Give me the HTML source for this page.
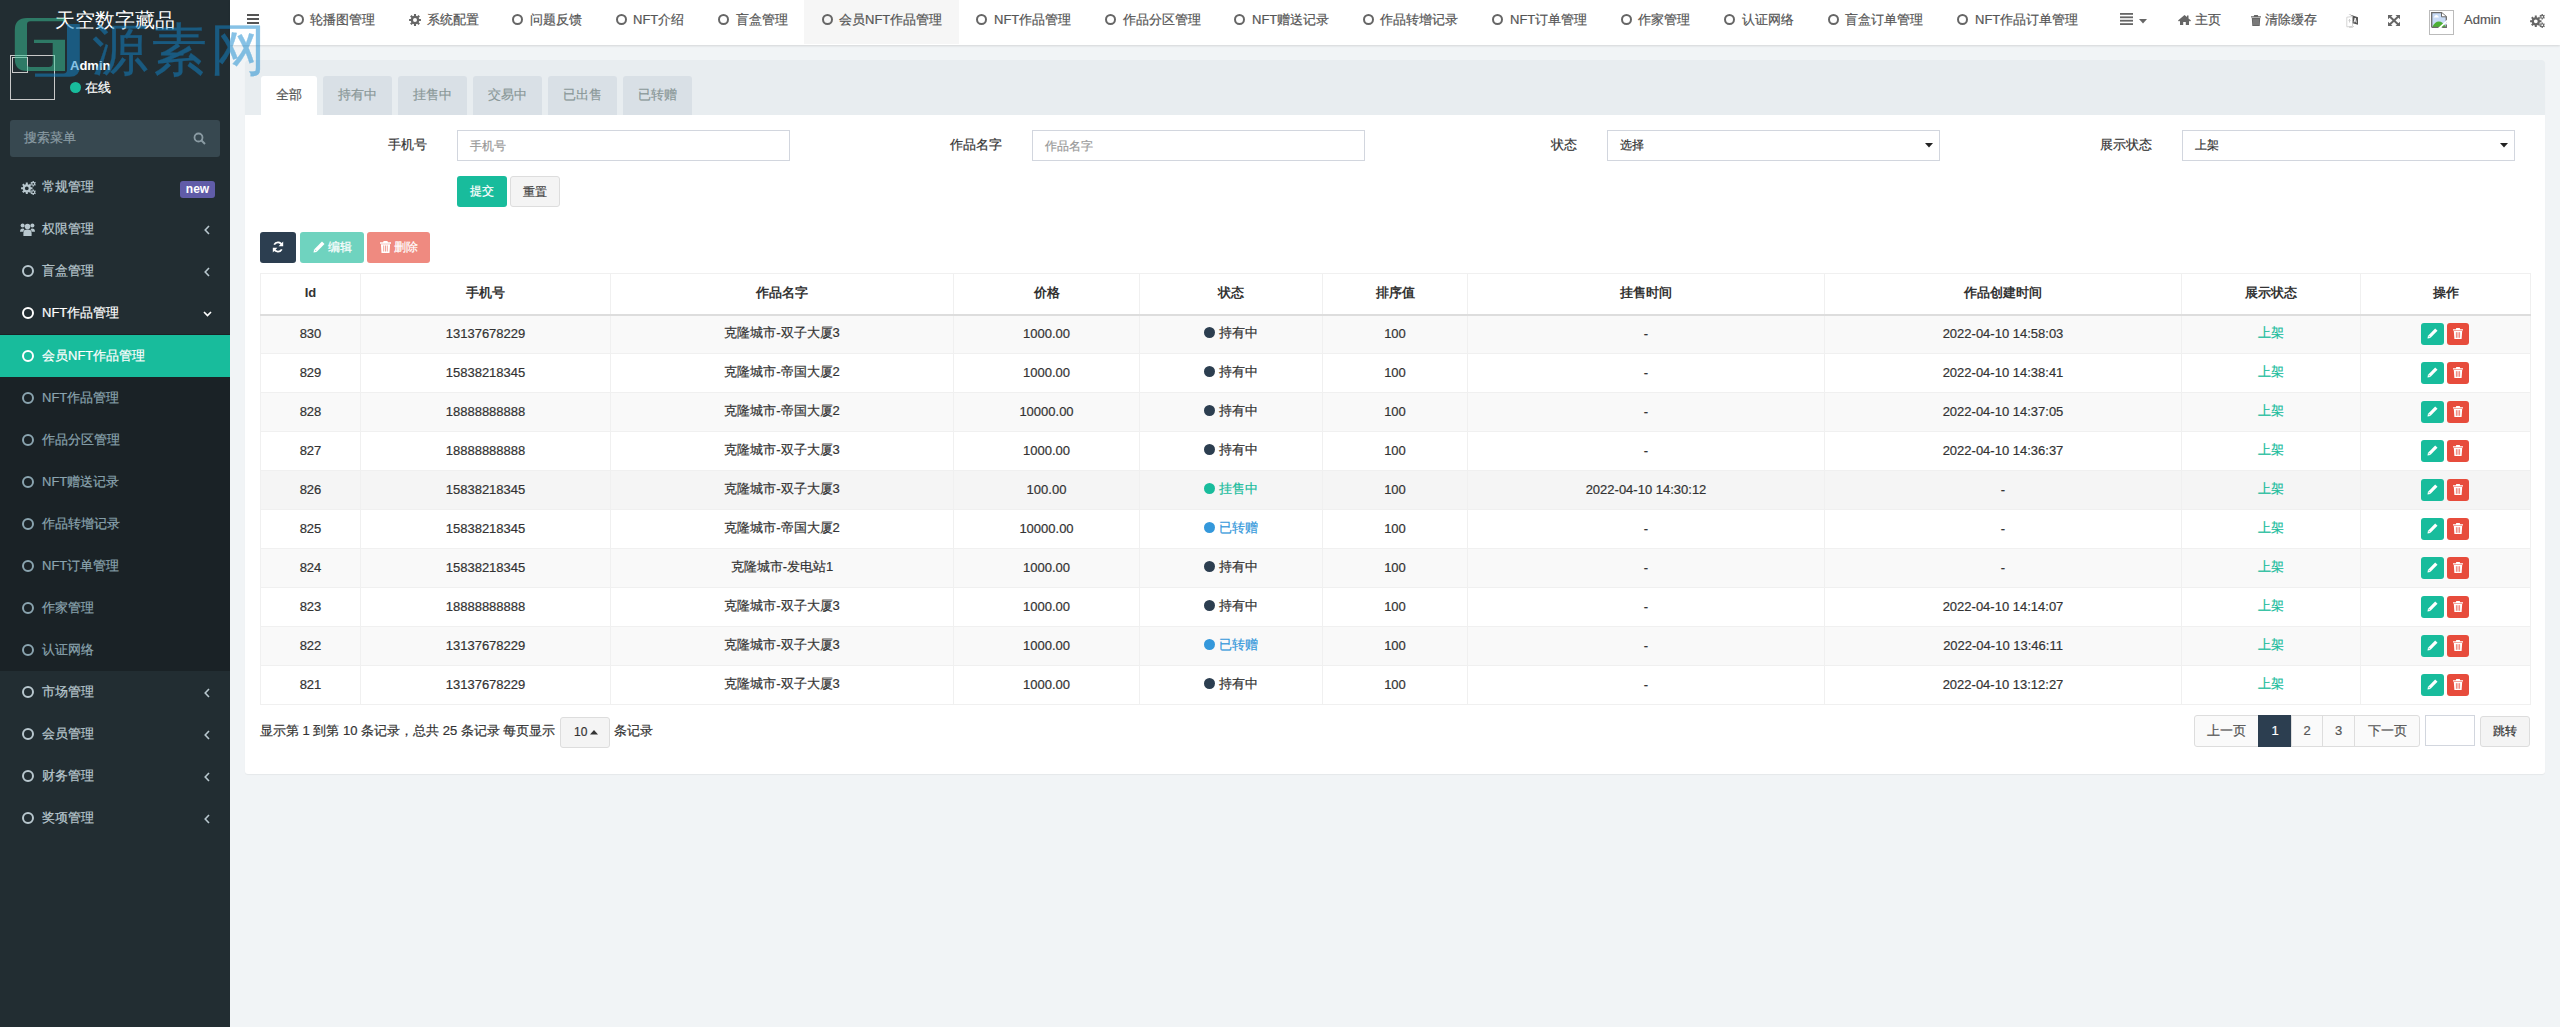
<!DOCTYPE html>
<html><head><meta charset="utf-8">
<style>
*{box-sizing:border-box;margin:0;padding:0}
html,body{width:2560px;height:1027px;overflow:hidden}
body{position:relative;background:#f1f4f6;font-family:"Liberation Sans",sans-serif;font-size:13px;color:#333}
.abs{position:absolute}
/* sidebar */
#side{position:absolute;left:0;top:0;width:230px;height:1027px;background:#222d32}
#side .logo{position:absolute;left:0;top:0;width:230px;height:45px;text-align:center;color:#fff;font-size:20px;line-height:40px}
#side .menu{position:absolute;left:0;top:166px;width:230px}
#side .mi{position:relative;height:42px;line-height:42px;color:#b8c7ce;font-size:13px;padding-left:42px}
#side .mi.sub{background:#1a2226;color:#8aa4af}
#side .mi.act{background:#18bc9c;color:#fff}
#side .mi.open{color:#fff}
.circ{position:absolute;width:12px;height:12px;border:2px solid currentColor;border-radius:50%}
#side .mi .circ{left:22px;top:15px}
#side .mi .ic{position:absolute;line-height:0}
#side .mi .ang{position:absolute;left:204px;top:17px}
#side .mi .angd{position:absolute;left:203px;top:19px}
/* header */
#hdr{position:absolute;left:230px;top:0;width:2330px;height:45px;background:#fff;box-shadow:0 1px 2px rgba(0,0,0,.12)}
#hdr .t{position:absolute;top:0;height:45px;line-height:40px;color:#555;font-size:13px;white-space:nowrap}
#hdr .circ{top:14px;width:11px;height:11px;border-width:2px;color:#666}
/* panel */
#panel{position:absolute;left:245px;top:60px;width:2300px;height:714px;background:#fff;border-radius:3px;box-shadow:0 1px 1px rgba(0,0,0,.05)}
#ph{position:absolute;left:0;top:0;width:2300px;height:55px;background:#e8edf0;border-radius:3px 3px 0 0}
.tab{position:absolute;top:16px;height:39px;line-height:37px;background:#d9e0e6;color:#8a9898;text-align:center;border-radius:3px 3px 0 0}
.tab.on{background:#fff;color:#555}
.lbl{text-align:right;font-size:13px;color:#333;line-height:18px}
.inp{width:333px;height:31px;border:1px solid #d2d6de;background:#fff}
.inp .ph{position:absolute;left:12px;top:6px;font-size:12px;color:#999;line-height:18px}
.inp .sv{position:absolute;left:12px;top:5px;font-size:12px;color:#333;line-height:18px}
.btn{text-align:center;font-size:12px;line-height:31px;border-radius:3px}
#tbl{border-collapse:collapse;table-layout:fixed;width:2270px;border:1px solid #f0f0f0}
#tbl th,#tbl td{text-align:center;vertical-align:middle;border-left:1px solid #f0f0f0;border-right:1px solid #f0f0f0}
#tbl th{height:41px;font-weight:bold;font-size:13px;color:#333;border-bottom:2px solid #ddd;padding-bottom:2px}
#tbl td{height:39px;font-size:13px;color:#333;border-top:1px solid #f0f0f0;padding-bottom:2px}
#tbl tr.odd td{background:#f9f9f9}
#tbl tr.hov td{background:#f5f5f5}
#tbl .dot{display:inline-block;width:11px;height:11px;border-radius:50%;margin-right:4px;vertical-align:-1px}
#tbl .up{color:#18bc9c}
.ob{display:inline-block;width:22px;height:22px;border-radius:3px;vertical-align:middle;text-align:center;line-height:22px;position:relative;left:-1px;top:1px}
.ob svg{vertical-align:-1px}
.pg{height:32px;display:flex}
.pg span{display:block;height:32px;line-height:30px;text-align:center;font-size:13px;color:#555;background:#fafafa;border:1px solid #ddd;margin-left:-1px}
.pg span.on{background:#2c3e50;border-color:#2c3e50;color:#fff}
body *{-webkit-text-stroke:0.2px currentColor}
th,b,.nostroke,#side .logo,#wm text,.bold{-webkit-text-stroke:0}
</style></head><body>

<svg id="wm" class="abs" style="left:0;top:0;z-index:50;pointer-events:none" width="280" height="82" viewBox="0 0 280 82">
  <g fill="rgb(58,199,154)" fill-opacity="0.5">
    <path d="M27 18H64.5V21.2H30.5Q27 21.2 27 24.5V63.8Q27 67 30.5 67H48.5Q52.7 67 52.7 62.8V42.9H34V39.7H65V71H27Q14.8 71 14.8 59V30Q14.8 18 27 18Z"/>
  </g>
  <g fill="rgb(18,135,206)" fill-opacity="0.5">
    <path d="M67 24H79.8V66.7Q79.8 76.7 69.8 76.7H35V73.4H63.5Q67 73.4 67 70Z"/>
  </g>
  <g opacity="0.5"><text x="92" y="69" font-size="56" letter-spacing="3" fill="rgb(18,135,206)" stroke="rgb(18,135,206)" stroke-width="0.3" stroke-linejoin="round">源素网</text></g>
</svg>
<div id="side">
  <div class="logo">天空数字藏品</div>
  <div class="abs" style="left:10px;top:55px;width:45px;height:45px;border:1px solid #c9c9c9"></div>
  <div class="abs" style="left:12px;top:57px;width:16px;height:16px;border:1px solid #c9c9c9"></div>
  <div class="abs bold" style="left:70px;top:58px;color:#fff;font-weight:bold;font-size:13px;line-height:16px">Admin</div>
  <div class="abs" style="left:70px;top:82px;width:11px;height:11px;border-radius:50%;background:#18bc9c"></div>
  <div class="abs" style="left:85px;top:79px;color:#fff;font-size:13px;line-height:18px">在线</div>
  <div class="abs" style="left:10px;top:120px;width:210px;height:37px;background:#374850;border-radius:3px"></div>
  <div class="abs" style="left:24px;top:129px;color:#8a9ba3;font-size:13px;line-height:18px">搜索菜单</div>
  <svg class="abs" style="left:193px;top:132px" width="13" height="13" viewBox="0 0 13 13"><circle cx="5.5" cy="5.5" r="4" fill="none" stroke="#8a9ba3" stroke-width="1.8"/><line x1="8.5" y1="8.5" x2="12" y2="12" stroke="#8a9ba3" stroke-width="2"/></svg>
  <div class="menu">
    <div class="mi"><span class="ic" style="left:21px;top:15px"><svg width="15" height="14" viewBox="0 0 15 14"><path fill-rule="evenodd" fill="currentColor" d="M4.82 3.22L4.78 1.59L6.82 1.59L6.78 3.22L7.99 3.72L9.12 2.54L10.56 3.98L9.38 5.11L9.88 6.32L11.51 6.28L11.51 8.32L9.88 8.28L9.38 9.49L10.56 10.62L9.12 12.06L7.99 10.88L6.78 11.38L6.82 13.01L4.78 13.01L4.82 11.38L3.61 10.88L2.48 12.06L1.04 10.62L2.22 9.49L1.72 8.28L0.09 8.32L0.09 6.28L1.72 6.32L2.22 5.11L1.04 3.98L2.48 2.54L3.61 3.72ZM7.70 7.30A1.9 1.9 0 1 0 3.90 7.30A1.9 1.9 0 1 0 7.70 7.30ZM11.57 1.01L11.49 0.09L12.91 0.09L12.83 1.01L13.43 1.36L14.19 0.83L14.90 2.06L14.07 2.45L14.07 3.15L14.90 3.54L14.19 4.77L13.43 4.24L12.83 4.59L12.91 5.51L11.49 5.51L11.57 4.59L10.97 4.24L10.21 4.77L9.50 3.54L10.33 3.15L10.33 2.45L9.50 2.06L10.21 0.83L10.97 1.36ZM13.10 2.80A0.9 0.9 0 1 0 11.30 2.80A0.9 0.9 0 1 0 13.10 2.80ZM11.57 9.41L11.49 8.49L12.91 8.49L12.83 9.41L13.43 9.76L14.19 9.23L14.90 10.46L14.07 10.85L14.07 11.55L14.90 11.94L14.19 13.17L13.43 12.64L12.83 12.99L12.91 13.91L11.49 13.91L11.57 12.99L10.97 12.64L10.21 13.17L9.50 11.94L10.33 11.55L10.33 10.85L9.50 10.46L10.21 9.23L10.97 9.76ZM13.10 11.20A0.9 0.9 0 1 0 11.30 11.20A0.9 0.9 0 1 0 13.10 11.20Z"/></svg></span>常规管理<span class="abs bold" style="left:180px;top:15px;width:35px;height:17px;line-height:17px;background:#605ca8;color:#fff;font-size:12px;font-weight:bold;text-align:center;border-radius:3px">new</span></div>
    <div class="mi"><span class="ic" style="left:20px;top:15px"><svg width="15" height="13" viewBox="0 0 15 13"><g fill="currentColor"><circle cx="2.6" cy="2.6" r="2"/><circle cx="12.4" cy="2.6" r="2"/><circle cx="7.5" cy="3.6" r="2.8"/><path d="M0 8.8Q0 5.4 2.8 5.4Q4 5.4 4.4 6.2Q3.4 7.4 3.4 8.8Z"/><path d="M15 8.8Q15 5.4 12.2 5.4Q11 5.4 10.6 6.2Q11.6 7.4 11.6 8.8Z"/><path d="M3.4 13V10.2Q3.4 6.8 6 6.8H9Q11.6 6.8 11.6 10.2V13Z"/></g></svg></span>权限管理<svg class="ang" width="6" height="10" viewBox="0 0 6 10"><path d="M5 1L1.2 5 5 9" fill="none" stroke="currentColor" stroke-width="1.6"/></svg></div>
    <div class="mi"><i class="circ"></i>盲盒管理<svg class="ang" width="6" height="10" viewBox="0 0 6 10"><path d="M5 1L1.2 5 5 9" fill="none" stroke="currentColor" stroke-width="1.6"/></svg></div>
    <div class="mi open"><i class="circ"></i>NFT作品管理<svg class="angd" width="9" height="6" viewBox="0 0 9 6"><path d="M1 1L4.5 4.6 8 1" fill="none" stroke="currentColor" stroke-width="1.6"/></svg></div>
    <div style="background:#1a2226;padding-top:1px"><div class="mi act"><i class="circ"></i>会员NFT作品管理</div>
    <div class="mi sub"><i class="circ"></i>NFT作品管理</div>
    <div class="mi sub"><i class="circ"></i>作品分区管理</div>
    <div class="mi sub"><i class="circ"></i>NFT赠送记录</div>
    <div class="mi sub"><i class="circ"></i>作品转增记录</div>
    <div class="mi sub"><i class="circ"></i>NFT订单管理</div>
    <div class="mi sub"><i class="circ"></i>作家管理</div>
    <div class="mi sub"><i class="circ"></i>认证网络</div></div>
    <div class="mi"><i class="circ"></i>市场管理<svg class="ang" width="6" height="10" viewBox="0 0 6 10"><path d="M5 1L1.2 5 5 9" fill="none" stroke="currentColor" stroke-width="1.6"/></svg></div>
    <div class="mi"><i class="circ"></i>会员管理<svg class="ang" width="6" height="10" viewBox="0 0 6 10"><path d="M5 1L1.2 5 5 9" fill="none" stroke="currentColor" stroke-width="1.6"/></svg></div>
    <div class="mi"><i class="circ"></i>财务管理<svg class="ang" width="6" height="10" viewBox="0 0 6 10"><path d="M5 1L1.2 5 5 9" fill="none" stroke="currentColor" stroke-width="1.6"/></svg></div>
    <div class="mi"><i class="circ"></i>奖项管理<svg class="ang" width="6" height="10" viewBox="0 0 6 10"><path d="M5 1L1.2 5 5 9" fill="none" stroke="currentColor" stroke-width="1.6"/></svg></div>
  </div>
</div>

<div id="hdr">
  <div class="abs" style="left:574px;top:0;width:155px;height:44px;background:#f6f6f6"></div>
  <svg class="abs" style="left:17px;top:14px" width="12" height="11"><rect x="0" y="0" width="12" height="2" fill="#555"/><rect x="0" y="4" width="12" height="2" fill="#555"/><rect x="0" y="8" width="12" height="2" fill="#555"/></svg>
  <i class="circ" style="left:63px"></i>
  <span class="t" style="left:80px">轮播图管理</span>
  <span class="abs" style="left:179px;top:14px;color:#666;line-height:0"><svg width="12" height="12" viewBox="0 0 12 12"><path fill-rule="evenodd" fill="currentColor" d="M5.00 1.82L4.95 0.09L7.05 0.09L7.00 1.82L8.25 2.33L9.43 1.08L10.92 2.57L9.67 3.75L10.18 5.00L11.91 4.95L11.91 7.05L10.18 7.00L9.67 8.25L10.92 9.43L9.43 10.92L8.25 9.67L7.00 10.18L7.05 11.91L4.95 11.91L5.00 10.18L3.75 9.67L2.57 10.92L1.08 9.43L2.33 8.25L1.82 7.00L0.09 7.05L0.09 4.95L1.82 5.00L2.33 3.75L1.08 2.57L2.57 1.08L3.75 2.33ZM8.00 6.00A2 2 0 1 0 4.00 6.00A2 2 0 1 0 8.00 6.00Z"/></svg></span>
  <span class="t" style="left:197px">系统配置</span>
  <i class="circ" style="left:282px"></i>
  <span class="t" style="left:300px">问题反馈</span>
  <i class="circ" style="left:386px"></i>
  <span class="t" style="left:403px">NFT介绍</span>
  <i class="circ" style="left:488px"></i>
  <span class="t" style="left:506px">盲盒管理</span>
  <i class="circ" style="left:592px"></i>
  <span class="t" style="left:609px">会员NFT作品管理</span>
  <i class="circ" style="left:746px"></i>
  <span class="t" style="left:764px">NFT作品管理</span>
  <i class="circ" style="left:875px"></i>
  <span class="t" style="left:893px">作品分区管理</span>
  <i class="circ" style="left:1004px"></i>
  <span class="t" style="left:1022px">NFT赠送记录</span>
  <i class="circ" style="left:1133px"></i>
  <span class="t" style="left:1150px">作品转增记录</span>
  <i class="circ" style="left:1262px"></i>
  <span class="t" style="left:1280px">NFT订单管理</span>
  <i class="circ" style="left:1391px"></i>
  <span class="t" style="left:1408px">作家管理</span>
  <i class="circ" style="left:1494px"></i>
  <span class="t" style="left:1512px">认证网络</span>
  <i class="circ" style="left:1598px"></i>
  <span class="t" style="left:1615px">盲盒订单管理</span>
  <i class="circ" style="left:1727px"></i>
  <span class="t" style="left:1745px">NFT作品订单管理</span>
  <svg class="abs" style="left:1890px;top:13px" width="14" height="12" viewBox="0 0 14 12"><g fill="#666"><rect x="0" y="0" width="13" height="1.8"/><rect x="0" y="3.4" width="13" height="1.8"/><rect x="0" y="6.8" width="13" height="1.8"/><rect x="0" y="10.2" width="13" height="1.8"/></g></svg>
  <svg class="abs" style="left:1909px;top:19px" width="8" height="5" viewBox="0 0 8 5"><path d="M0 0H8L4 4.5Z" fill="#666"/></svg>
  <svg class="abs" style="left:1948px;top:15px" width="13" height="10" viewBox="0 0 13 10"><path d="M6.5 0L0 5.6 1 6.5 2 5.7V10H5.2V7H7.8V10H11V5.7L12 6.5 13 5.6 10.5 3.4V0.6H9V2.1Z" fill="#666"/></svg>
  <span class="t" style="left:1965px">主页</span>
  <svg class="abs" style="left:2021px;top:15px" width="10" height="11" viewBox="0 0 10 11"><path d="M3.2 0H6.8L7.3 1.2H10V2.4H0V1.2H2.7ZM0.8 3H9.2L8.7 11H1.3Z" fill="#666"/><path d="M3 4.2V10M5 4.2V10M7 4.2V10" stroke="#999" stroke-width=".8"/></svg>
  <span class="t" style="left:2035px">清除缓存</span>
  <svg class="abs" style="left:2116px;top:13px" width="14" height="15" viewBox="0 0 14 15"><path d="M0.8 4.2L6.5 3.6V13.4L0.8 13.8Z" fill="#fff" stroke="#d0d0d0" stroke-width=".9"/><path d="M2.5 7.5Q3.6 6 4.6 7.6M3.5 6.2V9.5" stroke="#bbb" stroke-width=".7" fill="none"/><path d="M2.4 1.1L12 4.3V11.8L6.7 10.3V3.2Z" fill="#555"/><path d="M8 9.4L9.2 5 10.4 9.6M8.5 8H9.9" stroke="#fff" stroke-width=".9" fill="none"/><path d="M3 14.3H6.5L8 13" stroke="#bbb" stroke-width=".7" fill="none"/></svg>
  <svg class="abs" style="left:2158px;top:15px" width="12" height="11" viewBox="0 0 12 11"><g fill="#666"><path d="M0 0H4.5L3.2 1.3 6 4 3.2 1.3Z"/></g><path d="M1.2 1L10.8 10M10.8 1L1.2 10" stroke="#666" stroke-width="2"/><path d="M0 0H4.5L0 4.2ZM12 0H7.5L12 4.2ZM0 11H4.5L0 6.8ZM12 11H7.5L12 6.8Z" fill="#666"/></svg>
  <div class="abs" style="left:2199px;top:10px;width:25px;height:25px;border:1px solid #bbb"></div>
  <svg class="abs" style="left:2201px;top:12px" width="17" height="17" viewBox="0 0 17 17"><path d="M0.7 0.7H10.5L15.3 4.8V15.3H0.7Z" fill="#c8dbf6"/><path d="M2.6 5.6H7.8Q7.9 4.2 6.8 4.1Q6.3 2.7 5 3.2Q3.7 3.2 3.6 4.5Q2.6 4.6 2.6 5.6Z" fill="#fff"/><path d="M1.2 15.3Q3.8 9.6 7.8 9.6Q12 9.6 15 15.3Z" fill="#4cb034"/><path d="M0.7 15.3V0.7H10.5L15.3 4.8V10.4M0.7 15.3H8.4M15.3 12.6V15.3H11.2" fill="none" stroke="#6b6b6b" stroke-width="1.3"/><path d="M7.6 16.6L16.6 8.4" stroke="#fff" stroke-width="1.7"/><path d="M10.5 0.7V4.8H15.3" fill="#fff" stroke="#6b6b6b" stroke-width="1"/></svg>
  <span class="t" style="left:2234px">Admin</span>
  <span class="abs" style="left:2300px;top:14px;color:#666;line-height:0"><svg width="15" height="14" viewBox="0 0 15 14"><path fill-rule="evenodd" fill="currentColor" d="M4.82 3.22L4.78 1.59L6.82 1.59L6.78 3.22L7.99 3.72L9.12 2.54L10.56 3.98L9.38 5.11L9.88 6.32L11.51 6.28L11.51 8.32L9.88 8.28L9.38 9.49L10.56 10.62L9.12 12.06L7.99 10.88L6.78 11.38L6.82 13.01L4.78 13.01L4.82 11.38L3.61 10.88L2.48 12.06L1.04 10.62L2.22 9.49L1.72 8.28L0.09 8.32L0.09 6.28L1.72 6.32L2.22 5.11L1.04 3.98L2.48 2.54L3.61 3.72ZM7.70 7.30A1.9 1.9 0 1 0 3.90 7.30A1.9 1.9 0 1 0 7.70 7.30ZM11.57 1.01L11.49 0.09L12.91 0.09L12.83 1.01L13.43 1.36L14.19 0.83L14.90 2.06L14.07 2.45L14.07 3.15L14.90 3.54L14.19 4.77L13.43 4.24L12.83 4.59L12.91 5.51L11.49 5.51L11.57 4.59L10.97 4.24L10.21 4.77L9.50 3.54L10.33 3.15L10.33 2.45L9.50 2.06L10.21 0.83L10.97 1.36ZM13.10 2.80A0.9 0.9 0 1 0 11.30 2.80A0.9 0.9 0 1 0 13.10 2.80ZM11.57 9.41L11.49 8.49L12.91 8.49L12.83 9.41L13.43 9.76L14.19 9.23L14.90 10.46L14.07 10.85L14.07 11.55L14.90 11.94L14.19 13.17L13.43 12.64L12.83 12.99L12.91 13.91L11.49 13.91L11.57 12.99L10.97 12.64L10.21 13.17L9.50 11.94L10.33 11.55L10.33 10.85L9.50 10.46L10.21 9.23L10.97 9.76ZM13.10 11.20A0.9 0.9 0 1 0 11.30 11.20A0.9 0.9 0 1 0 13.10 11.20Z"/></svg></span>
</div>

<div id="panel">
  <div id="ph">
    <div class="tab on" style="left:16px;width:56px">全部</div>
    <div class="tab" style="left:78px;width:69px">持有中</div>
    <div class="tab" style="left:153px;width:69px">挂售中</div>
    <div class="tab" style="left:228px;width:69px">交易中</div>
    <div class="tab" style="left:303px;width:69px">已出售</div>
    <div class="tab" style="left:378px;width:69px">已转赠</div>
  </div>
  <div class="abs lbl" style="left:-18px;top:76px;width:200px">手机号</div>
  <div class="abs inp" style="left:212px;top:70px"><span class="ph">手机号</span></div>
  <div class="abs lbl" style="left:557px;top:76px;width:200px">作品名字</div>
  <div class="abs inp" style="left:787px;top:70px"><span class="ph">作品名字</span></div>
  <div class="abs lbl" style="left:1132px;top:76px;width:200px">状态</div>
  <div class="abs inp" style="left:1362px;top:70px"><span class="sv">选择</span><svg class="abs" style="left:317px;top:12px" width="8" height="5" viewBox="0 0 8 5"><path d="M0 0H8L4 4.5Z" fill="#222"/></svg></div>
  <div class="abs lbl" style="left:1707px;top:76px;width:200px">展示状态</div>
  <div class="abs inp" style="left:1937px;top:70px"><span class="sv">上架</span><svg class="abs" style="left:317px;top:12px" width="8" height="5" viewBox="0 0 8 5"><path d="M0 0H8L4 4.5Z" fill="#222"/></svg></div>
  <div class="abs btn" style="left:212px;top:116px;width:50px;height:31px;background:#18bc9c;color:#fff">提交</div>
  <div class="abs btn" style="left:265px;top:116px;width:50px;height:31px;background:#f4f4f4;color:#444;border:1px solid #ddd">重置</div>
  <div class="abs btn" style="left:15px;top:172px;width:36px;height:31px;background:#2c3e50;color:#fff"><svg width="12" height="12" viewBox="0 0 12 12" style="margin-top:9px"><path d="M10 4.2A4.3 4.3 0 0 0 2.2 3.6" fill="none" stroke="#fff" stroke-width="1.8"/><path d="M11.2 0.6V5.2H6.6Z" fill="#fff"/><path d="M2 7.8A4.3 4.3 0 0 0 9.8 8.4" fill="none" stroke="#fff" stroke-width="1.8"/><path d="M0.8 11.4V6.8H5.4Z" fill="#fff"/></svg></div>
  <div class="abs btn" style="left:55px;top:172px;width:64px;height:31px;background:#6fd3bf;color:#fff"><svg width="12" height="12" viewBox="0 0 12 12" style="vertical-align:-2px;margin-right:3px"><path d="M9 0.5L11.5 3 3.6 10.9 0.5 11.5 1.1 8.4Z" fill="#fff"/><path d="M1.8 8.6L3.4 10.2" stroke="#6fd3bf" stroke-width=".7"/></svg>编辑</div>
  <div class="abs btn" style="left:122px;top:172px;width:63px;height:31px;background:#ef8a80;color:#fff"><svg width="11" height="12" viewBox="0 0 11 12" style="vertical-align:-2px;margin-right:3px"><path d="M3.6 0H7.4L7.9 1.3H11V2.7H0V1.3H3.1ZM0.9 3.3H10.1L9.5 12H1.5Z" fill="#fff"/><path d="M3.7 4.5V10.5M5.5 4.5V10.5M7.3 4.5V10.5" stroke="#ef8a80" stroke-width=".8"/></svg>删除</div>
  <table id="tbl" class="abs" style="left:15px;top:213px">
  <colgroup><col style="width:100px"><col style="width:250px"><col style="width:343px"><col style="width:186px"><col style="width:183px"><col style="width:145px"><col style="width:357px"><col style="width:357px"><col style="width:179px"><col style="width:170px"></colgroup>
  <tr class="hd"><th>Id</th><th>手机号</th><th>作品名字</th><th>价格</th><th>状态</th><th>排序值</th><th>挂售时间</th><th>作品创建时间</th><th>展示状态</th><th>操作</th></tr>
  <tr class="odd"><td>830</td><td>13137678229</td><td>克隆城市-双子大厦3</td><td>1000.00</td><td><span style="color:#333"><i class="dot" style="background:#2c3e50"></i>持有中</span></td><td>100</td><td>-</td><td>2022-04-10 14:58:03</td><td class="up">上架</td><td><span class="ob" style="background:#18bc9c;width:23px"><svg width="11" height="11" viewBox="0 0 11 11"><path d="M8.2 0.5L10.5 2.8 3.3 10 0.5 10.5 1 7.7Z" fill="#fff"/><path d="M1.6 7.9L3.1 9.4" stroke="#18bc9c" stroke-width=".6"/></svg></span><span class="ob" style="background:#e74c3c;margin-left:3px"><svg width="10" height="11" viewBox="0 0 10 11"><path d="M3.3 0H6.7L7.2 1.2H10V2.5H0V1.2H2.8ZM0.8 3H9.2L8.6 11H1.4Z" fill="#fff"/><path d="M3.4 4.2V9.8M5 4.2V9.8M6.6 4.2V9.8" stroke="#e74c3c" stroke-width=".7"/></svg></span></td></tr>
  <tr class="even"><td>829</td><td>15838218345</td><td>克隆城市-帝国大厦2</td><td>1000.00</td><td><span style="color:#333"><i class="dot" style="background:#2c3e50"></i>持有中</span></td><td>100</td><td>-</td><td>2022-04-10 14:38:41</td><td class="up">上架</td><td><span class="ob" style="background:#18bc9c;width:23px"><svg width="11" height="11" viewBox="0 0 11 11"><path d="M8.2 0.5L10.5 2.8 3.3 10 0.5 10.5 1 7.7Z" fill="#fff"/><path d="M1.6 7.9L3.1 9.4" stroke="#18bc9c" stroke-width=".6"/></svg></span><span class="ob" style="background:#e74c3c;margin-left:3px"><svg width="10" height="11" viewBox="0 0 10 11"><path d="M3.3 0H6.7L7.2 1.2H10V2.5H0V1.2H2.8ZM0.8 3H9.2L8.6 11H1.4Z" fill="#fff"/><path d="M3.4 4.2V9.8M5 4.2V9.8M6.6 4.2V9.8" stroke="#e74c3c" stroke-width=".7"/></svg></span></td></tr>
  <tr class="odd"><td>828</td><td>18888888888</td><td>克隆城市-帝国大厦2</td><td>10000.00</td><td><span style="color:#333"><i class="dot" style="background:#2c3e50"></i>持有中</span></td><td>100</td><td>-</td><td>2022-04-10 14:37:05</td><td class="up">上架</td><td><span class="ob" style="background:#18bc9c;width:23px"><svg width="11" height="11" viewBox="0 0 11 11"><path d="M8.2 0.5L10.5 2.8 3.3 10 0.5 10.5 1 7.7Z" fill="#fff"/><path d="M1.6 7.9L3.1 9.4" stroke="#18bc9c" stroke-width=".6"/></svg></span><span class="ob" style="background:#e74c3c;margin-left:3px"><svg width="10" height="11" viewBox="0 0 10 11"><path d="M3.3 0H6.7L7.2 1.2H10V2.5H0V1.2H2.8ZM0.8 3H9.2L8.6 11H1.4Z" fill="#fff"/><path d="M3.4 4.2V9.8M5 4.2V9.8M6.6 4.2V9.8" stroke="#e74c3c" stroke-width=".7"/></svg></span></td></tr>
  <tr class="even"><td>827</td><td>18888888888</td><td>克隆城市-双子大厦3</td><td>1000.00</td><td><span style="color:#333"><i class="dot" style="background:#2c3e50"></i>持有中</span></td><td>100</td><td>-</td><td>2022-04-10 14:36:37</td><td class="up">上架</td><td><span class="ob" style="background:#18bc9c;width:23px"><svg width="11" height="11" viewBox="0 0 11 11"><path d="M8.2 0.5L10.5 2.8 3.3 10 0.5 10.5 1 7.7Z" fill="#fff"/><path d="M1.6 7.9L3.1 9.4" stroke="#18bc9c" stroke-width=".6"/></svg></span><span class="ob" style="background:#e74c3c;margin-left:3px"><svg width="10" height="11" viewBox="0 0 10 11"><path d="M3.3 0H6.7L7.2 1.2H10V2.5H0V1.2H2.8ZM0.8 3H9.2L8.6 11H1.4Z" fill="#fff"/><path d="M3.4 4.2V9.8M5 4.2V9.8M6.6 4.2V9.8" stroke="#e74c3c" stroke-width=".7"/></svg></span></td></tr>
  <tr class="hov"><td>826</td><td>15838218345</td><td>克隆城市-双子大厦3</td><td>100.00</td><td><span style="color:#18bc9c"><i class="dot" style="background:#18bc9c"></i>挂售中</span></td><td>100</td><td>2022-04-10 14:30:12</td><td>-</td><td class="up">上架</td><td><span class="ob" style="background:#18bc9c;width:23px"><svg width="11" height="11" viewBox="0 0 11 11"><path d="M8.2 0.5L10.5 2.8 3.3 10 0.5 10.5 1 7.7Z" fill="#fff"/><path d="M1.6 7.9L3.1 9.4" stroke="#18bc9c" stroke-width=".6"/></svg></span><span class="ob" style="background:#e74c3c;margin-left:3px"><svg width="10" height="11" viewBox="0 0 10 11"><path d="M3.3 0H6.7L7.2 1.2H10V2.5H0V1.2H2.8ZM0.8 3H9.2L8.6 11H1.4Z" fill="#fff"/><path d="M3.4 4.2V9.8M5 4.2V9.8M6.6 4.2V9.8" stroke="#e74c3c" stroke-width=".7"/></svg></span></td></tr>
  <tr class="even"><td>825</td><td>15838218345</td><td>克隆城市-帝国大厦2</td><td>10000.00</td><td><span style="color:#3498db"><i class="dot" style="background:#3498db"></i>已转赠</span></td><td>100</td><td>-</td><td>-</td><td class="up">上架</td><td><span class="ob" style="background:#18bc9c;width:23px"><svg width="11" height="11" viewBox="0 0 11 11"><path d="M8.2 0.5L10.5 2.8 3.3 10 0.5 10.5 1 7.7Z" fill="#fff"/><path d="M1.6 7.9L3.1 9.4" stroke="#18bc9c" stroke-width=".6"/></svg></span><span class="ob" style="background:#e74c3c;margin-left:3px"><svg width="10" height="11" viewBox="0 0 10 11"><path d="M3.3 0H6.7L7.2 1.2H10V2.5H0V1.2H2.8ZM0.8 3H9.2L8.6 11H1.4Z" fill="#fff"/><path d="M3.4 4.2V9.8M5 4.2V9.8M6.6 4.2V9.8" stroke="#e74c3c" stroke-width=".7"/></svg></span></td></tr>
  <tr class="odd"><td>824</td><td>15838218345</td><td>克隆城市-发电站1</td><td>1000.00</td><td><span style="color:#333"><i class="dot" style="background:#2c3e50"></i>持有中</span></td><td>100</td><td>-</td><td>-</td><td class="up">上架</td><td><span class="ob" style="background:#18bc9c;width:23px"><svg width="11" height="11" viewBox="0 0 11 11"><path d="M8.2 0.5L10.5 2.8 3.3 10 0.5 10.5 1 7.7Z" fill="#fff"/><path d="M1.6 7.9L3.1 9.4" stroke="#18bc9c" stroke-width=".6"/></svg></span><span class="ob" style="background:#e74c3c;margin-left:3px"><svg width="10" height="11" viewBox="0 0 10 11"><path d="M3.3 0H6.7L7.2 1.2H10V2.5H0V1.2H2.8ZM0.8 3H9.2L8.6 11H1.4Z" fill="#fff"/><path d="M3.4 4.2V9.8M5 4.2V9.8M6.6 4.2V9.8" stroke="#e74c3c" stroke-width=".7"/></svg></span></td></tr>
  <tr class="even"><td>823</td><td>18888888888</td><td>克隆城市-双子大厦3</td><td>1000.00</td><td><span style="color:#333"><i class="dot" style="background:#2c3e50"></i>持有中</span></td><td>100</td><td>-</td><td>2022-04-10 14:14:07</td><td class="up">上架</td><td><span class="ob" style="background:#18bc9c;width:23px"><svg width="11" height="11" viewBox="0 0 11 11"><path d="M8.2 0.5L10.5 2.8 3.3 10 0.5 10.5 1 7.7Z" fill="#fff"/><path d="M1.6 7.9L3.1 9.4" stroke="#18bc9c" stroke-width=".6"/></svg></span><span class="ob" style="background:#e74c3c;margin-left:3px"><svg width="10" height="11" viewBox="0 0 10 11"><path d="M3.3 0H6.7L7.2 1.2H10V2.5H0V1.2H2.8ZM0.8 3H9.2L8.6 11H1.4Z" fill="#fff"/><path d="M3.4 4.2V9.8M5 4.2V9.8M6.6 4.2V9.8" stroke="#e74c3c" stroke-width=".7"/></svg></span></td></tr>
  <tr class="odd"><td>822</td><td>13137678229</td><td>克隆城市-双子大厦3</td><td>1000.00</td><td><span style="color:#3498db"><i class="dot" style="background:#3498db"></i>已转赠</span></td><td>100</td><td>-</td><td>2022-04-10 13:46:11</td><td class="up">上架</td><td><span class="ob" style="background:#18bc9c;width:23px"><svg width="11" height="11" viewBox="0 0 11 11"><path d="M8.2 0.5L10.5 2.8 3.3 10 0.5 10.5 1 7.7Z" fill="#fff"/><path d="M1.6 7.9L3.1 9.4" stroke="#18bc9c" stroke-width=".6"/></svg></span><span class="ob" style="background:#e74c3c;margin-left:3px"><svg width="10" height="11" viewBox="0 0 10 11"><path d="M3.3 0H6.7L7.2 1.2H10V2.5H0V1.2H2.8ZM0.8 3H9.2L8.6 11H1.4Z" fill="#fff"/><path d="M3.4 4.2V9.8M5 4.2V9.8M6.6 4.2V9.8" stroke="#e74c3c" stroke-width=".7"/></svg></span></td></tr>
  <tr class="even"><td>821</td><td>13137678229</td><td>克隆城市-双子大厦3</td><td>1000.00</td><td><span style="color:#333"><i class="dot" style="background:#2c3e50"></i>持有中</span></td><td>100</td><td>-</td><td>2022-04-10 13:12:27</td><td class="up">上架</td><td><span class="ob" style="background:#18bc9c;width:23px"><svg width="11" height="11" viewBox="0 0 11 11"><path d="M8.2 0.5L10.5 2.8 3.3 10 0.5 10.5 1 7.7Z" fill="#fff"/><path d="M1.6 7.9L3.1 9.4" stroke="#18bc9c" stroke-width=".6"/></svg></span><span class="ob" style="background:#e74c3c;margin-left:3px"><svg width="10" height="11" viewBox="0 0 10 11"><path d="M3.3 0H6.7L7.2 1.2H10V2.5H0V1.2H2.8ZM0.8 3H9.2L8.6 11H1.4Z" fill="#fff"/><path d="M3.4 4.2V9.8M5 4.2V9.8M6.6 4.2V9.8" stroke="#e74c3c" stroke-width=".7"/></svg></span></td></tr>
  </table>
  <div class="abs" style="left:15px;top:662px;line-height:18px;font-size:13px;color:#333">显示第 1 到第 10 条记录，总共 25 条记录 每页显示</div>
  <div class="abs" style="left:315px;top:657px;width:50px;height:31px;background:#f4f4f4;border:1px solid #ddd;border-radius:3px;font-size:12px;line-height:29px;padding-left:13px;color:#333">10<svg width="8" height="5" viewBox="0 0 8 5" style="margin-left:3px;vertical-align:1px"><path d="M0 4.5H8L4 0Z" fill="#333"/></svg></div>
  <div class="abs" style="left:369px;top:662px;line-height:18px;font-size:13px;color:#333">条记录</div>
  <div class="abs pg" style="left:1949px;top:655px">
    <span style="width:65px;border-radius:3px 0 0 3px;margin-left:0">上一页</span><span class="on" style="width:34px">1</span><span style="width:32px">2</span><span style="width:33px">3</span><span style="width:66px;border-radius:0 3px 3px 0">下一页</span>
  </div>
  <div class="abs" style="left:2180px;top:655px;width:50px;height:31px;border:1px solid #d2d6de;background:#fff"></div>
  <div class="abs" style="left:2235px;top:656px;width:50px;height:31px;border:1px solid #ddd;background:#f4f4f4;border-radius:3px;text-align:center;line-height:29px;font-size:12px;color:#333">跳转</div>
</div>

</body></html>
